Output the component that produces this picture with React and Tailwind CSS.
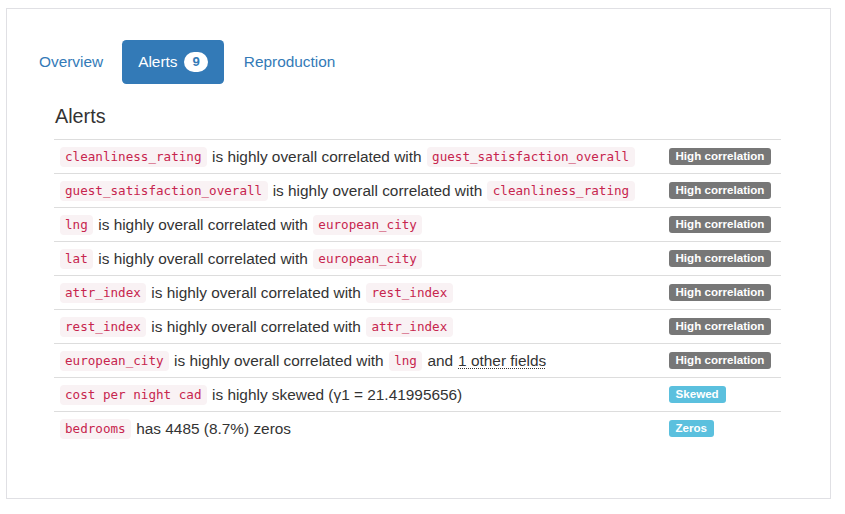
import React from 'react'

const alerts = [
  { parts: [['c', 'cleanliness_rating'], ['t', 'is highly overall correlated with'], ['c', 'guest_satisfaction_overall']], label: 'High correlation', kind: 'default' },
  { parts: [['c', 'guest_satisfaction_overall'], ['t', 'is highly overall correlated with'], ['c', 'cleanliness_rating']], label: 'High correlation', kind: 'default' },
  { parts: [['c', 'lng'], ['t', 'is highly overall correlated with'], ['c', 'european_city']], label: 'High correlation', kind: 'default' },
  { parts: [['c', 'lat'], ['t', 'is highly overall correlated with'], ['c', 'european_city']], label: 'High correlation', kind: 'default' },
  { parts: [['c', 'attr_index'], ['t', 'is highly overall correlated with'], ['c', 'rest_index']], label: 'High correlation', kind: 'default' },
  { parts: [['c', 'rest_index'], ['t', 'is highly overall correlated with'], ['c', 'attr_index']], label: 'High correlation', kind: 'default' },
  { parts: [['c', 'european_city'], ['t', 'is highly overall correlated with'], ['c', 'lng'], ['t', 'and'], ['a', '1 other fields']], label: 'High correlation', kind: 'default' },
  { parts: [['c', 'cost per night cad'], ['t', 'is highly skewed (γ1 = 21.41995656)']], label: 'Skewed', kind: 'info' },
  { parts: [['c', 'bedrooms'], ['t', 'has 4485 (8.7%) zeros']], label: 'Zeros', kind: 'info' },
]

function Code({ children }) {
  return (
    <code className="rounded-[4px] bg-[#f9f2f4] px-[5.5px] py-[2.5px] font-['DejaVu_Sans_Mono',monospace] text-[12.6px] leading-[15px] text-[#c7254e]">
      {children}
    </code>
  )
}

function Part({ type, value }) {
  if (type === 'c') return <Code>{value}</Code>
  if (type === 'a') {
    return (
      <abbr className="cursor-help underline decoration-dotted decoration-1 underline-offset-[2px]">{value}</abbr>
    )
  }
  return <span>{value}</span>
}

export default function App() {
  return (
    <div className="min-h-[514px] bg-white pl-[6px] pt-[8px] font-['Liberation_Sans',Arial,sans-serif] text-[15.4px] text-[#333]">
      <div className="h-[491px] w-[825px] border border-[#e0e0e4] pt-[31px]">
        <ul className="flex pl-[17px]">
          <li>
            <a className="block rounded-[4.4px] px-[15px] py-[11px] leading-[22px] text-[#337ab7]">Overview</a>
          </li>
          <li className="ml-[4px]">
            <a className="flex items-center rounded-[4.4px] bg-[#337ab7] px-[16px] py-[11px] leading-[22px] text-white">
              Alerts
              <span className="ml-[7px] rounded-[11px] bg-white px-[8px] py-[3.5px] text-[13.2px] font-bold leading-none text-[#337ab7]">
                9
              </span>
            </a>
          </li>
          <li className="ml-[4px]">
            <a className="block rounded-[4.4px] px-[16px] py-[11px] leading-[22px] text-[#337ab7]">Reproduction</a>
          </li>
        </ul>

        <div className="px-[47px]">
          <h4 className="mt-[21px] mb-[12px] pl-[1px] text-[19.8px] leading-[22px] font-normal">Alerts</h4>
          <div className="w-[727px]">
            {alerts.map((row, i) => (
              <div key={i} className="flex h-[34px] items-center border-t border-[#ddd] leading-[22px]">
                <div className="flex flex-1 items-center gap-[5px] px-[5.5px] whitespace-nowrap">
                  {row.parts.map(([type, value], j) => (
                    <Part key={j} type={type} value={value} />
                  ))}
                </div>
                <div className="flex w-[118px] items-center px-[5.5px]">
                  <span
                    className={`rounded-[3px] px-[7px] pt-[2.5px] pb-[3px] text-[11.6px] font-bold leading-none text-white ${
                      row.kind === 'info' ? 'bg-[#5bc0de]' : 'bg-[#777]'
                    }`}
                  >
                    {row.label}
                  </span>
                </div>
              </div>
            ))}
          </div>
        </div>
      </div>
    </div>
  )
}
